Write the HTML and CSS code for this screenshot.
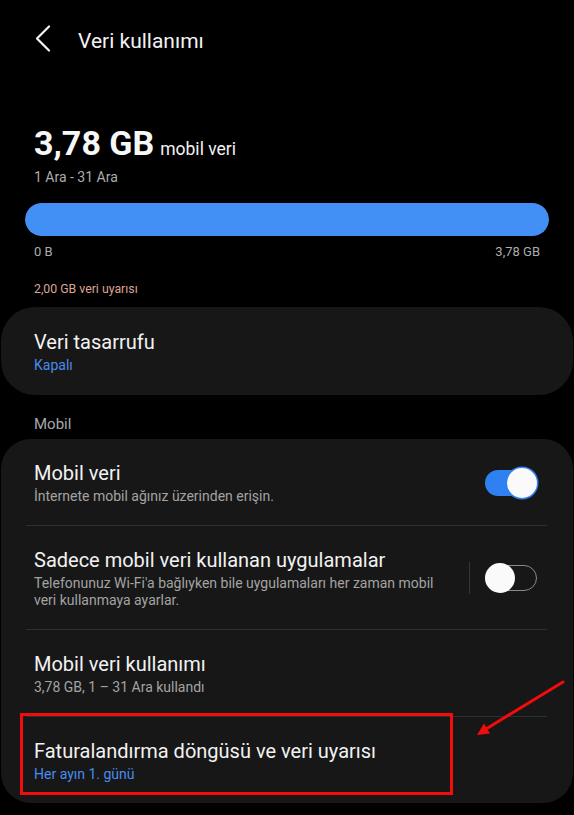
FILE: index.html
```html
<!DOCTYPE html>
<html lang="tr">
<head>
<meta charset="utf-8">
<title>Veri kullanımı</title>
<link rel="stylesheet" href="styles.css">
</head>
<body>
<div class="page">
  <header class="header">
    <svg class="back" width="18" height="27" viewBox="0 0 18 27"><path d="M15 1.5 L3 13.5 L15 25.5" fill="none" stroke="#f2f2f2" stroke-width="2.2" stroke-linecap="round" stroke-linejoin="round"/></svg>
    <h1 class="title">Veri kullanımı</h1>
  </header>

  <section class="summary">
    <div class="amount"><span class="big">3,78 GB</span><span class="unit">mobil veri</span></div>
    <div class="period">1 Ara - 31 Ara</div>
    <div class="bar"><div class="bar-fill" style="width:100%"></div></div>
    <div class="bar-labels"><span>0 B</span><span>3,78 GB</span></div>
    <div class="warning">2,00 GB veri uyarısı</div>
  </section>

  <div class="card single">
    <div class="row">
      <div class="text">
        <div class="row-title">Veri tasarrufu</div>
        <div class="row-sub blue">Kapalı</div>
      </div>
    </div>
  </div>

  <div class="section-label">Mobil</div>

  <div class="card">
    <div class="row">
      <div class="text">
        <div class="row-title">Mobil veri</div>
        <div class="row-sub">İnternete mobil ağınız üzerinden erişin.</div>
      </div>
      <div class="toggle on"><span class="knob"></span></div>
    </div>
    <div class="divider"></div>
    <div class="row">
      <div class="text">
        <div class="row-title">Sadece mobil veri kullanan uygulamalar</div>
        <div class="row-sub">Telefonunuz Wi-Fi'a bağlıyken bile uygulamaları her zaman mobil veri kullanmaya ayarlar.</div>
      </div>
      <div class="vsep"></div>
      <div class="toggle off"><span class="knob"></span></div>
    </div>
    <div class="divider"></div>
    <div class="row">
      <div class="text">
        <div class="row-title">Mobil veri kullanımı</div>
        <div class="row-sub">3,78 GB, 1 – 31 Ara kullandı</div>
      </div>
    </div>
    <div class="divider"></div>
    <div class="row">
      <div class="text">
        <div class="row-title">Faturalandırma döngüsü ve veri uyarısı</div>
        <div class="row-sub blue">Her ayın 1. günü</div>
      </div>
    </div>
  </div>

  <svg class="annotation" width="574" height="815" viewBox="0 0 574 815">
    <rect x="21.5" y="714.5" width="430" height="79" fill="none" stroke="#f20c0c" stroke-width="3"/>
    <line x1="563" y1="682" x2="486" y2="729" stroke="#f20c0c" stroke-width="3" stroke-linecap="round"/>
    <polygon points="477,735 490,733.5 484,723.5" fill="#f20c0c"/>
  </svg>
</div>
</body>
</html>
```
FILE: styles.css
```css
* { box-sizing: border-box; }
html, body {
  margin: 0;
  padding: 0;
  background: #000;
}
body {
  font-family: Roboto, "Noto Sans", "Liberation Sans", sans-serif;
  color: #f2f2f2;
}
.page {
  position: relative;
  width: 574px;
  height: 815px;
  overflow: hidden;
}
.header {
  display: flex;
  align-items: center;
  height: 28px;
  margin-top: 27px;
  padding-left: 34px;
}
.back {
  display: block;
  margin-top: -5px;
}
.title {
  margin: 0 0 0 26px;
  font-size: 21px;
  font-weight: 400;
  line-height: 28px;
  color: #f2f2f2;
}
.summary {
  padding: 0 34px;
  margin-top: 68px;
}
.amount {
  line-height: 40px;
  height: 40px;
}
.big {
  font-size: 34px;
  font-weight: 700;
  color: #f7f7f7;
}
.unit {
  font-size: 17.5px;
  line-height: 1;
  margin-left: 6px;
  color: #f2f2f2;
}
.period {
  margin-top: 5px;
  font-size: 14px;
  line-height: 18px;
  color: #acacac;
}
.bar {
  margin: 17px -9px 0;
  height: 33px;
  border-radius: 17px;
  background: #2a2a2a;
  overflow: hidden;
}
.bar-fill {
  height: 100%;
  background: #4290f6;
  border-radius: 17px;
}
.bar-labels {
  display: flex;
  justify-content: space-between;
  margin-top: 8px;
  font-size: 13px;
  line-height: 16px;
  color: #acacac;
}
.warning {
  margin-top: 21px;
  font-size: 12.3px;
  line-height: 16px;
  color: #dca595;
}
.card {
  margin: 0 1px;
  background: #171717;
  border-radius: 30px;
}
.card.single {
  margin-top: 10px;
  border-radius: 34px;
}
.card.single .row {
  padding-top: 22px;
  padding-bottom: 21px;
}
.row {
  display: flex;
  align-items: center;
  padding: 21px 36px 20px 33px;
}
.text {
  flex: 1;
  min-width: 0;
}
.row-title {
  font-size: 20px;
  line-height: 26px;
  color: #f2f2f2;
}
.row-sub {
  margin-top: 2px;
  font-size: 14px;
  line-height: 17px;
  color: #a3a3a3;
}
.row-sub.blue {
  color: #4a8bef;
}
.divider {
  height: 1px;
  margin: 0 26px 0 25px;
  background: #2f2f2f;
}
.section-label {
  margin-top: 19px;
  margin-bottom: 5px;
  padding-left: 34px;
  font-size: 15px;
  line-height: 20px;
  color: #a8a8a8;
}
.vsep {
  width: 1px;
  height: 32px;
  background: #363636;
  margin-left: 10px;
  margin-right: 15px;
}
.toggle {
  position: relative;
  width: 52px;
  height: 30px;
  flex: none;
}
.toggle::before {
  content: "";
  position: absolute;
  left: 0;
  right: 2px;
  top: 2px;
  bottom: 2px;
  border-radius: 14px;
}
.toggle.on::before {
  background: #2f81f2;
}
.toggle.off::before {
  left: 0;
  right: 0;
  border: 1.5px solid #8a8a8a;
  background: #171717;
}
.knob {
  position: absolute;
  top: 0;
  width: 30px;
  height: 30px;
  border-radius: 50%;
  background: #fafafa;
}
.toggle.on .knob {
  right: 0;
  box-shadow: 0 0 0 1.5px #2f81f2;
}
.toggle.off .knob {
  left: 0;
}
.annotation {
  position: absolute;
  left: 0;
  top: 0;
  pointer-events: none;
}
```
